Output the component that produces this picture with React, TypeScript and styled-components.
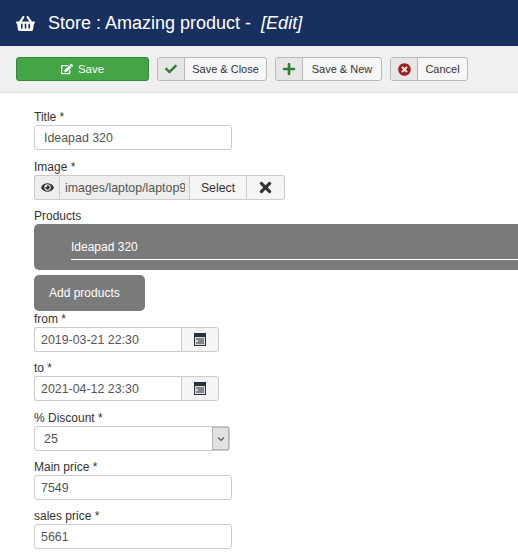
import React from 'react';
import styled, { createGlobalStyle } from 'styled-components';
import { FaCheck, FaEdit, FaEye, FaPlus, FaShoppingBasket, FaTimes, FaTimesCircle } from 'react-icons/fa';

const GlobalStyle = createGlobalStyle`
  html, body {
    margin: 0;
    padding: 0;
    background: #fff;
    overflow: hidden;
  }
  body {
    font-family: "Liberation Sans", Arial, sans-serif;
    font-size: 12px;
    color: #333;
  }
`;

const Page = styled.div`
  width: 518px;
  height: 557px;
  overflow: hidden;
`;

const Header = styled.header`
  height: 46px;
  background: #17305f;
  display: flex;
  align-items: center;
  padding-left: 16px;
  gap: 13px;
  color: #fff;
`;

const Title = styled.h1`
  margin: 0;
  font-size: 18px;
  font-weight: 400;
  white-space: pre;
  line-height: 46px;
`;

const Toolbar = styled.div`
  height: 47px;
  box-sizing: border-box;
  background: #f0f0f0;
  border-bottom: 1px solid #e0e0e0;
  display: flex;
  align-items: flex-start;
  gap: 8px;
  padding: 11px 0 0 16px;
`;

const SaveButton = styled.button`
  width: 133px;
  height: 24px;
  padding: 0;
  border: 1px solid #37853a;
  border-radius: 3px;
  background: #43a546;
  color: #fff;
  font: 11.5px "Liberation Sans", Arial, sans-serif;
  display: flex;
  align-items: center;
  justify-content: center;
  gap: 5px;
`;

const ToolButton = styled.button<{ $width: number }>`
  width: ${(p) => p.$width}px;
  height: 24px;
  padding: 0;
  border: 1px solid #b9b9b9;
  border-radius: 3px;
  background: #f7f7f7;
  color: #333;
  font: 11px "Liberation Sans", Arial, sans-serif;
  display: flex;
  align-items: stretch;
  overflow: hidden;
`;

const ToolIcon = styled.span<{ $color: string }>`
  width: 26px;
  flex: none;
  background: #e6e6e6;
  border-right: 1px solid #b9b9b9;
  color: ${(p) => p.$color};
  display: flex;
  align-items: center;
  justify-content: center;
`;

const ToolLabel = styled.span`
  flex: 1;
  display: flex;
  align-items: center;
  justify-content: center;
`;

const Form = styled.div`
  padding: 16px 0 0 34px;
  display: flex;
  flex-direction: column;
`;

const Field = styled.div<{ $after?: number }>`
  display: flex;
  flex-direction: column;
  margin-bottom: ${(p) => p.$after ?? 8}px;
`;

const Label = styled.label`
  height: 16px;
  line-height: 16px;
  font-size: 12px;
  color: #333;
`;

const TextInput = styled.input<{ $indent?: number }>`
  width: 198px;
  height: 25px;
  box-sizing: border-box;
  border: 1px solid #ccc;
  border-radius: 3px;
  padding: 0 0 0 ${(p) => p.$indent ?? 6}px;
  font: 12.4px "Liberation Sans", Arial, sans-serif;
  color: #555;
  background: #fff;
  outline: none;
`;

const Group = styled.div`
  display: flex;
  height: 25px;
  width: fit-content;
`;

const Addon = styled.span`
  width: 25px;
  box-sizing: border-box;
  border: 1px solid #ccc;
  border-right: 0;
  border-radius: 3px 0 0 3px;
  background: #eee;
  color: #333;
  display: flex;
  align-items: center;
  justify-content: center;
`;

const PathInput = styled.input`
  width: 131px;
  box-sizing: border-box;
  border: 1px solid #ccc;
  background: #eee;
  color: #555;
  font: 12.4px "Liberation Sans", Arial, sans-serif;
  padding: 0 4px 0 5px;
  outline: none;
`;

const GroupButton = styled.button<{ $width: number; $last?: boolean }>`
  width: ${(p) => p.$width}px;
  padding: 0;
  border: 1px solid #ccc;
  border-left: 0;
  border-radius: ${(p) => (p.$last ? '0 3px 3px 0' : '0')};
  background: #f5f5f5;
  color: #333;
  font: 12.3px "Liberation Sans", Arial, sans-serif;
  display: flex;
  align-items: center;
  justify-content: center;
`;

const ProductsPanel = styled.div`
  height: 46px;
  box-sizing: border-box;
  background: #7a7a7a;
  border-radius: 5px 0 0 5px;
  padding: 0 0 10px 37px;
  display: flex;
`;

const ProductName = styled.div`
  flex: 1;
  color: #fff;
  font-size: 12px;
  display: flex;
  align-items: center;
  padding-top: 11px;
  border-bottom: 1px solid #fff;
`;

const AddButton = styled.button`
  width: 111px;
  height: 36px;
  margin-top: 5px;
  padding: 0 0 0 15px;
  border: 0;
  border-radius: 5px;
  background: #7a7a7a;
  color: #fff;
  font: 12px "Liberation Sans", Arial, sans-serif;
  text-align: left;
`;

const DateInput = styled.input`
  width: 147px;
  box-sizing: border-box;
  border: 1px solid #ccc;
  border-right: 0;
  border-radius: 3px 0 0 3px;
  padding: 0 0 0 6px;
  font: 12.4px "Liberation Sans", Arial, sans-serif;
  color: #555;
  outline: none;
`;

const DateButton = styled.button`
  width: 38px;
  padding: 0;
  border: 1px solid #ccc;
  border-radius: 0 3px 3px 0;
  background: #f5f5f5;
  display: flex;
  align-items: center;
  justify-content: center;
`;

const Select = styled.div`
  width: 196px;
  height: 25px;
  box-sizing: border-box;
  border: 1px solid #ccc;
  border-radius: 3px;
  padding-left: 9px;
  font-size: 12.4px;
  color: #555;
  display: flex;
  align-items: center;
  justify-content: space-between;
`;

const SelectArrow = styled.span`
  width: 17px;
  height: 23px;
  box-sizing: border-box;
  background: #e2e2e2;
  border: 1px solid #b5b5b5;
  display: flex;
  align-items: center;
  justify-content: center;
`;

const CalendarIcon = () => (
  <svg width="12" height="13" viewBox="0 0 12 13">
    <rect x="0" y="0" width="12" height="13" fill="#27323c" />
    <rect x="1" y="4" width="10" height="8" fill="#d8dadc" />
    <path d="M2 6h8M4 8h6M2 10h8" stroke="#27323c" strokeWidth="1.2" />
  </svg>
);

const DateField = ({ label, value, after }: { label: string; value: string; after?: number }) => (
  <Field $after={after}>
    <Label>{label}</Label>
    <Group>
      <DateInput readOnly value={value} />
      <DateButton>
        <CalendarIcon />
      </DateButton>
    </Group>
  </Field>
);

export default function App() {
  return (
    <Page>
      <GlobalStyle />
      <Header>
        <FaShoppingBasket size={19} />
        <Title>
          Store : Amazing product -  <em>[Edit]</em>
        </Title>
      </Header>
      <Toolbar>
        <SaveButton>
          <FaEdit size={12} />
          Save
        </SaveButton>
        <ToolButton $width={110}>
          <ToolIcon $color="#2f7d32">
            <FaCheck size={12} />
          </ToolIcon>
          <ToolLabel>Save &amp; Close</ToolLabel>
        </ToolButton>
        <ToolButton $width={107}>
          <ToolIcon $color="#2f7d32">
            <FaPlus size={14} />
          </ToolIcon>
          <ToolLabel>Save &amp; New</ToolLabel>
        </ToolButton>
        <ToolButton $width={78}>
          <ToolIcon $color="#a32020">
            <FaTimesCircle size={13} />
          </ToolIcon>
          <ToolLabel>Cancel</ToolLabel>
        </ToolButton>
      </Toolbar>
      <Form>
        <Field $after={9}>
          <Label>Title *</Label>
          <TextInput $indent={9} readOnly value="Ideapad 320" />
        </Field>
        <Field>
          <Label>Image *</Label>
          <Group>
            <Addon>
              <FaEye size={13} />
            </Addon>
            <PathInput readOnly value="images/laptop/laptop9" />
            <GroupButton $width={57}>Select</GroupButton>
            <GroupButton $width={38} $last>
              <FaTimes size={17} />
            </GroupButton>
          </Group>
        </Field>
        <Label>Products</Label>
        <ProductsPanel>
          <ProductName>Ideapad 320</ProductName>
        </ProductsPanel>
        <AddButton>Add products</AddButton>
        <DateField label="from *" value="2019-03-21 22:30" />
        <DateField label="to *" value="2021-04-12 23:30" after={9} />
        <Field>
          <Label>% Discount *</Label>
          <Select>
            25
            <SelectArrow>
              <svg width="8" height="6" viewBox="0 0 8 6">
                <path d="M1 1.5l3 3 3-3" fill="none" stroke="#555" strokeWidth="1.2" />
              </svg>
            </SelectArrow>
          </Select>
        </Field>
        <Field>
          <Label>Main price *</Label>
          <TextInput readOnly value="7549" />
        </Field>
        <Field>
          <Label>sales price *</Label>
          <TextInput readOnly value="5661" />
        </Field>
      </Form>
    </Page>
  );
}
